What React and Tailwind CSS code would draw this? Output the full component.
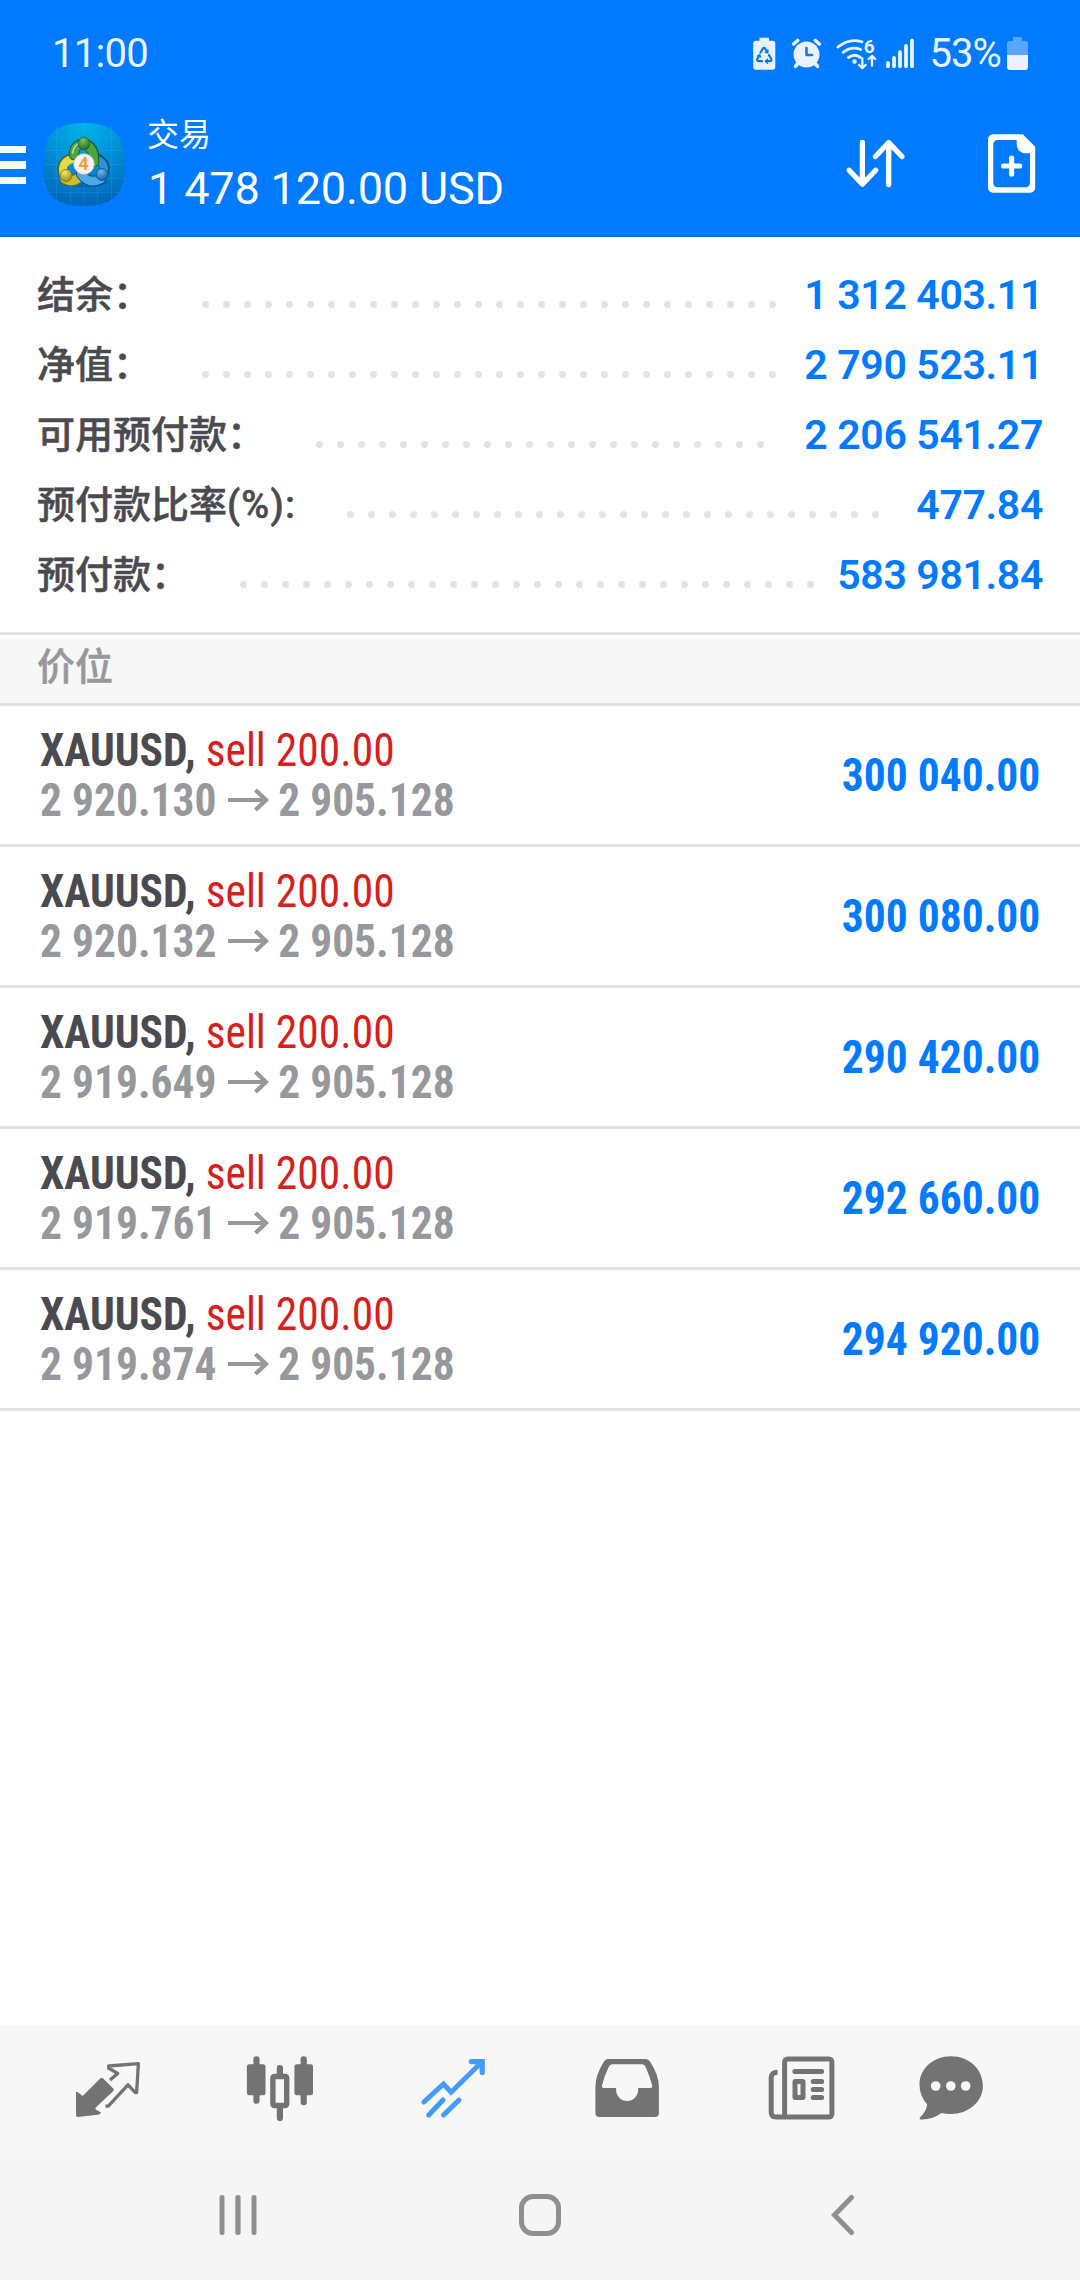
import React, {useState} from "react";

const summary = [
  {label: "结余：", value: "1 312 403.11"},
  {label: "净值：", value: "2 790 523.11"},
  {label: "可用预付款：", value: "2 206 541.27"},
  {label: "预付款比率", unit: "(%):", value: "477.84"},
  {label: "预付款：", value: "583 981.84"},
];

const positions = [
  {symbol: "XAUUSD", side: "sell 200.00", open: "2 920.130", current: "2 905.128", profit: "300 040.00"},
  {symbol: "XAUUSD", side: "sell 200.00", open: "2 920.132", current: "2 905.128", profit: "300 080.00"},
  {symbol: "XAUUSD", side: "sell 200.00", open: "2 919.649", current: "2 905.128", profit: "290 420.00"},
  {symbol: "XAUUSD", side: "sell 200.00", open: "2 919.761", current: "2 905.128", profit: "292 660.00"},
  {symbol: "XAUUSD", side: "sell 200.00", open: "2 919.874", current: "2 905.128", profit: "294 920.00"},
];

// status bar icons
function StatusIcons() {
  return (
    <svg className="w-[164px] h-[36px]" viewBox="752 36 164 36" fill="none" stroke="#e8f3ff" strokeLinecap="round" strokeLinejoin="round">
      {/* battery protection */}
      <path d="M759.5 37.7h9.5v3h3.500a2.800 2.800 0 0 1 2.800 2.800v23.500a2.800 2.800 0 0 1-2.800 2.800h-16.500a2.800 2.800 0 0 1-2.800-2.800v-23.500a2.800 2.800 0 0 1 2.800-2.800h3.500z" fill="#e8f3ff" stroke="none"/>
      <path d="M760.500 52.500l2.300-3.800q1.200-1.700 2.400 0l2 3.300M769 55l2.200 4q.8 2.200-1.600 2.200h-3.300M762 61.200h-3q-2.400-.2-1.600-2.200l2-3.700" stroke="#0f74e8" strokeWidth="2.200"/>
      <path d="M765.300 52.500h2.600v-2.500M767.500 59.200l-2 2l2 2M757.300 56l2.200-1.200l1.100 2.200" stroke="#0f74e8" strokeWidth="1.300"/>
      {/* alarm */}
      <circle cx="806.500" cy="54.500" r="13" fill="#e8f3ff" stroke="none"/>
      <path d="M793.700 44l4-3.500M819.300 44l-4-3.500" strokeWidth="3.600"/>
      <path d="M797.500 64l-2 2.300M815.500 64l2 2.300" strokeWidth="3.600"/>
      <path d="M806.500 48v7h5.500" stroke="#1079f0" strokeWidth="2.600"/>
      {/* wifi 6 */}
      <path d="M838 47q11-9.200 24-5.200M843.200 52.300q8.500-6.500 17.500-2.800M848.500 57.500q6.200-4.400 12 0" strokeWidth="2.900"/>
      <circle cx="854.500" cy="61.500" r="2.200" fill="#e8f3ff" stroke="none"/>
      <path d="M862.300 58.500v9.500M859 65l3.300 3.200l3.300-3.200M872 65.500v-9.500M868.700 59l3.300-3.200l3.300 3.200" strokeWidth="2.400"/>
      <text x="863.700" y="52.500" fontFamily="Roboto, sans-serif" fontSize="19" fontWeight="700" fill="#e8f3ff" stroke="none">6</text>
      {/* signal */}
      <path d="M888 63v3.200M894 58v8.200M900 52v14.200M906 46v20.200M912 40.500v25.700" strokeWidth="3.800"/>
    </svg>
  );
}

function BatteryIcon() {
  return (
    <svg className="w-[21px] h-[34px]" viewBox="0 0 21 34" fill="#e8f3ff">
      <path d="M6 0h9v4h3a3 3 0 0 1 3 3v11H0V7a3 3 0 0 1 3-3h3z" fill="#58a6ff"/>
      <path d="M0 18h21v12a3 3 0 0 1-3 3H3a3 3 0 0 1-3-3z"/>
    </svg>
  );
}

function AppLogo() {
  return (
    <svg className="w-[82px] h-[83px]" viewBox="0 0 82 83">
      <defs>
        <radialGradient id="tile" cx="0.5" cy="0" r="1">
          <stop offset="0" stopColor="#00b5ec"/>
          <stop offset="0.5" stopColor="#0090d8"/>
          <stop offset="1" stopColor="#0065b8"/>
        </radialGradient>
        <radialGradient id="green" cx="0.4" cy="0.25" r="0.8"><stop offset="0" stopColor="#7cc060"/><stop offset="1" stopColor="#176b25"/></radialGradient>
        <radialGradient id="yellow" cx="0.4" cy="0.25" r="0.8"><stop offset="0" stopColor="#f2ea6a"/><stop offset="1" stopColor="#978512"/></radialGradient>
        <radialGradient id="blue" cx="0.4" cy="0.25" r="0.8"><stop offset="0" stopColor="#6cbcf0"/><stop offset="1" stopColor="#0b5aa6"/></radialGradient>
      </defs>
      <path d="M41 0C70 0 82 12 82 41.500S70 83 41 83S0 71 0 41.500S12 0 41 0z" fill="url(#tile)"/>
      <path d="M13.500 3v77M27.500 0v83M41 0v83M54.500 0v83M68.500 3v77M3 14h76M0 27.500h82M0 41.500h82M0 55.500h82M3 69.500h76" stroke="#5cc8f5" strokeOpacity="0.14" strokeWidth="1"/>
      <ellipse cx="41" cy="60" rx="24" ry="4" fill="#003f78" opacity="0.25"/>
      {/* three linked figures around the badge */}
      <g fill="none" strokeLinecap="round">
        <path d="M21 53Q16 39 29 35" stroke="#5b5f1c" strokeWidth="10"/>
        <path d="M22 56Q32 61 39 51" stroke="#6e6a1c" strokeWidth="11"/>
        <path d="M21 53Q17 39 29 36" stroke="#e3dc4a" strokeWidth="8"/>
        <path d="M22 56Q32 61 39 51" stroke="#cdbd30" strokeWidth="9"/>
        <path d="M60 52Q65 41 54 35" stroke="#0e4f86" strokeWidth="9.500"/>
        <path d="M58 56Q46 62 38 51" stroke="#0e4f86" strokeWidth="10.500"/>
        <path d="M60 52Q64 41 54 36" stroke="#2f93d8" strokeWidth="7.500"/>
        <path d="M58 56Q46 62 38 51" stroke="#4aaae8" strokeWidth="8.500"/>
        <path d="M31 32Q31 21 41 21Q52 23 51 39" stroke="#1f5f2c" strokeWidth="10.500"/>
        <path d="M31 32Q31 21 41 21.500Q51 23 51 39" stroke="#4ba543" strokeWidth="8.500"/>
        <path d="M29.500 30Q31 22 37 20" stroke="#b6dfa0" strokeWidth="1.500"/>
      </g>
      <ellipse cx="41" cy="20.500" rx="5.800" ry="6.500" fill="url(#green)" stroke="#1f5f2c" strokeWidth="0.800"/>
      <circle cx="23" cy="52.500" r="6" fill="url(#yellow)" stroke="#7c711c" strokeWidth="0.800"/>
      <circle cx="59" cy="51.500" r="6" fill="url(#blue)" stroke="#0e4f86" strokeWidth="0.800"/>
      <circle cx="41" cy="41" r="10.300" fill="#f6f3ee" stroke="#c9c4b8" strokeWidth="0.800"/>
      <text x="40.500" y="47.200" textAnchor="middle" fontFamily="Roboto, sans-serif" fontSize="17.500" fontWeight="700" fill="#f59a3c">4</text>
    </svg>
  );
}

function SortIcon() {
  return (
    <svg className="w-[60px] h-[60px]" viewBox="846 134 60 60" fill="none" stroke="white" strokeWidth="5.300" strokeLinecap="round" strokeLinejoin="round">
      <path d="M862.400 142.500v41.500M849.200 170.300l13.200 14l13.200-14"/>
      <path d="M888.700 184.500v-41.500M875.500 156.500l13.200-14l13.200 14"/>
    </svg>
  );
}

function NewOrderIcon() {
  return (
    <svg className="w-[48px] h-[60px]" viewBox="988 134 48 60" fill="none">
      <path fillRule="evenodd" fill="white" d="M993 134.300H1022.700L1035.200 146.800V187.700a5 5 0 0 1-5 5H993a5 5 0 0 1-5-5V139.300a5 5 0 0 1 5-5zM997.500 140a4.200 4.200 0 0 0-4.200 4.200V183a4.200 4.200 0 0 0 4.200 4.200H1025.800a4.200 4.200 0 0 0 4.200-4.200V153.300H1025.500a8.800 8.800 0 0 1-8.800-8.800V140z"/>
      <path d="M1011.600 158v16M1003.600 166h16" stroke="white" strokeWidth="5.200" strokeLinecap="round"/>
    </svg>
  );
}

function ArrowRight() {
  return (
    <svg className="w-[45px] h-[24px] shrink-0" viewBox="0 0 42 24" preserveAspectRatio="none" fill="none" stroke="#97989c" strokeWidth="4.200">
      <path d="M0 12h38M27.500 2l10.500 10l-10.500 10"/>
    </svg>
  );
}

// bottom tabs
function QuotesIcon() {
  return (
    <svg className="w-[72px] h-[72px]" viewBox="0 0 72 72" fill="none">
      <path d="M4 38.700L5.500 39L10.700 43L28.300 25.500q1.400-1.400 2.800 0L41.300 35.500q1.200 1.200 0 2.400L23.800 54.500q-1 1.200 0 2L29 59.500L27.500 61.500L6 64q-2 0-2-2z" fill="currentColor"/>
      <path d="M38 27L45.700 20.400L36.800 15.300L36.600 13L66.400 10.700L64.600 39.600L63.400 39.600L56 31.800L36.500 52.800L33.500 53.300" stroke="currentColor" strokeWidth="3.300" strokeLinejoin="round"/>
    </svg>
  );
}

function ChartIcon() {
  return (
    <svg className="w-[72px] h-[72px]" viewBox="0 0 72 72" fill="currentColor">
      <rect x="9.400" y="3.300" width="6.200" height="47.500" rx="3"/>
      <rect x="2.900" y="11.300" width="18.600" height="30.900" rx="2.500"/>
      <rect x="56.600" y="3.300" width="6.200" height="49" rx="3"/>
      <rect x="50.400" y="11.300" width="18.600" height="30.900" rx="2.500"/>
      <path d="M32.800 21v-6a3.100 3.100 0 0 1 6.200 0v6zM32.800 55v10a3.100 3.100 0 0 0 6.200 0V55z"/>
      <rect x="28.900" y="23.500" width="13.800" height="29" rx="1.500" fill="none" stroke="currentColor" strokeWidth="5.400"/>
    </svg>
  );
}

function TradeIcon() {
  return (
    <svg className="w-[72px] h-[72px]" viewBox="0 0 72 72" fill="none" stroke="currentColor" strokeWidth="5" strokeLinecap="round">
      <path d="M6.900 49L26.500 31L34.100 39.200L65 8.700" strokeLinejoin="miter"/>
      <path d="M54.300 8.600H65.200V19.400" strokeWidth="5.200"/>
      <path d="M11.700 62L26 47M26.500 62L42 47"/>
    </svg>
  );
}

function HistoryIcon() {
  return (
    <svg className="w-[72px] h-[72px]" viewBox="0 0 72 72" fill="currentColor">
      <path fillRule="evenodd" d="M16.500 6H55q2.500 0 4 2.500Q67.900 22 67.900 34V60a4 4 0 0 1-4 4H8.400a4 4 0 0 1-4-4V34Q4.400 22 13 8.500Q14.500 6 16.500 6zM21 11.300q-2.200 0-3.200 2.500Q13 24 11 32.500Q10.600 35 13 35H25.100v2a11 11 0 0 0 22 0V35H59.300q2.300 0 1.900-2.500Q59 24 54.500 13.800Q53.500 11.300 51.500 11.300z"/>
    </svg>
  );
}

function NewsIcon() {
  return (
    <svg className="w-[72px] h-[72px]" viewBox="0 0 72 72" fill="none" stroke="currentColor" strokeWidth="5">
      <rect x="18.600" y="5.900" width="47.300" height="58.200" rx="3"/>
      <path d="M11.600 19.300Q5.200 19.300 5.200 24.500V59q0 5.100 5 5.100H20"/>
      <path d="M28.900 18.500H55.600M47.200 28.500h8.400M47.200 36.500h8.400M47.200 44.500h8.400" strokeLinecap="round"/>
      <rect x="29" y="28.500" width="8" height="16" rx="0.500"/>
    </svg>
  );
}

function ChatIcon() {
  return (
    <svg className="w-[72px] h-[72px]" viewBox="0 0 72 72">
      <path d="M36 3.300C54 3.300 67.900 16 67.900 33C67.900 49 53 61 36 61Q31 61 26.500 60Q17 67 5.500 66.500Q3.700 66 5 64.500Q11.500 58 12.200 51.500Q4.500 43 4.500 31.500C4.500 16 18 3.300 36 3.300z" fill="currentColor"/>
      <g fill="#f7f7f7">
        <circle cx="20.700" cy="33" r="4.800"/>
        <circle cx="35.800" cy="33" r="4.800"/>
        <circle cx="50.700" cy="33" r="4.800"/>
      </g>
    </svg>
  );
}

const tabs = [
  {id: "quotes", icon: QuotesIcon, space: ""},
  {id: "chart", icon: ChartIcon, space: "ml-[100px]"},
  {id: "trade", icon: TradeIcon, space: "ml-[101px]"},
  {id: "history", icon: HistoryIcon, space: "ml-[102px]"},
  {id: "news", icon: NewsIcon, space: "ml-[103px]"},
  {id: "chat", icon: ChatIcon, space: "ml-[77px]"},
];

function SummaryRow({label, unit, value}) {
  return (
    <div className="flex h-[70px] items-center">
      <div className="pt-[2px] text-[38px] font-medium text-[#4b4a50] whitespace-nowrap [-webkit-text-stroke:0.5px_#4b4a50]">
        {label}
        {unit && <span className="tracking-[1.2px]">{unit}</span>}
      </div>
      {/* leader dots, the ones that don't fit wrap out of sight */}
      <div className="ml-[51px] mr-[21.5px] mt-[20px] flex h-[7px] flex-1 flex-wrap gap-x-[14px] overflow-hidden">
        {Array.from({length: 32}).map((_, i) => (
          <span key={i} className="size-[7px] rounded-full bg-[#e3e3e3]"/>
        ))}
      </div>
      <div className="pt-[4px] text-[41px] font-semibold tracking-[-0.35px] text-[#007aff] whitespace-nowrap">{value}</div>
    </div>
  );
}

function PositionRow({item}) {
  return (
    <div className="flex h-[141px] items-center justify-between border-b-[3px] border-[#e3e3e3] pl-[40px] pr-[40px] font-['Roboto_Condensed',Roboto,sans-serif] text-[46.5px] leading-[50px] [font-stretch:75%]">
      <div className="origin-left scale-x-[0.935]">
        <div className="whitespace-nowrap">
          <span className="font-bold text-[#4b4a50]">{item.symbol}, </span>
          <span className="text-[#d62020]">{item.side}</span>
        </div>
        <div className="flex items-center whitespace-nowrap font-bold text-[#97989c]">
          <span>{item.open}</span>
          <span className="ml-[12px] mr-[9px] flex"><ArrowRight/></span>
          <span>{item.current}</span>
        </div>
      </div>
      <div className="origin-right scale-x-[0.935] font-bold text-[#007aff]">{item.profit}</div>
    </div>
  );
}

export default function App() {
  const [tab, setTab] = useState("trade");

  return (
    <div className="flex h-[2280px] w-[1080px] flex-col overflow-hidden bg-white font-[Roboto,'Noto_Sans_CJK_SC',sans-serif]">
      <header className="h-[237px] border-b-2 border-[#0b6cd0] bg-[#007aff] text-white">
        <div className="flex h-[107px] items-center pl-[52px] pr-[52px] text-[40px] text-[#e8f3ff]">
          <span className="flex-1 pt-px tracking-[-0.7px]">11:00</span>
          <StatusIcons/>
          <span className="ml-[13px] mr-[6px] pt-px tracking-[-0.9px]">53%</span>
          <BatteryIcon/>
        </div>
        <div className="flex h-[114px] items-center">
          <div className="flex w-[26px] flex-col gap-[8px] pt-[2px]">
            <span className="h-[7px] bg-white"/>
            <span className="h-[8px] bg-white"/>
            <span className="h-[7px] bg-white"/>
          </div>
          <div className="ml-[17px]"><AppLogo/></div>
          <div className="ml-[22px] flex-1 pt-px">
            <div className="text-[32px] leading-[48px]">交易</div>
            <div className="pl-px text-[45px] leading-[60px] tracking-[-0.15px]">1 478 120.00 USD</div>
          </div>
          <SortIcon/>
          <div className="ml-[82px] mr-[44px]"><NewOrderIcon/></div>
        </div>
      </header>

      <section className="h-[398px] border-b-[3px] border-[#e3e3e3] pl-[37px] pr-[37px] pt-[22px]">
        {summary.map((row) => <SummaryRow key={row.label} label={row.label} unit={row.unit} value={row.value}/>)}
      </section>

      <div className="mt-[3px] flex h-[68px] items-center border-b-[3px] border-[#e3e3e3] bg-[#f7f7f7] pb-[7px] pl-[37px] text-[38px] font-medium text-[#97989c] [-webkit-text-stroke:0.5px_#97989c]">价位</div>

      <main className="flex-1">
        {positions.map((item) => <PositionRow key={item.open} item={item}/>)}
      </main>

      <nav className="flex h-[129px] items-center bg-[#f7f7f7] pb-[2px] pl-[72px]">
        {tabs.map(({id, icon: Icon, space}) => (
          <button key={id} aria-label={id} onClick={() => setTab(id)} className={`${space} ${tab === id ? "text-[#449bfc]" : "text-[#737373]"}`}>
            <Icon/>
          </button>
        ))}
      </nav>

      <div className="flex h-[126px] items-center bg-[#f5f5f5] pb-[4px] pl-[219px]">
        <svg className="h-[40px] w-[38px]" viewBox="0 0 38 40" fill="#8f8f8f">
          <rect x="0.500" width="5" height="40" rx="2.500"/>
          <rect x="16.300" width="5.300" height="40" rx="2.500"/>
          <rect x="32.500" width="5" height="40" rx="2.500"/>
        </svg>
        <div className="ml-[262px] h-[42px] w-[42px] rounded-[14px] border-[5px] border-[#8f8f8f]"/>
        <svg className="ml-[269px] h-[42px] w-[26px]" viewBox="0 0 26 42" fill="none" stroke="#8f8f8f" strokeWidth="5" strokeLinecap="round">
          <path d="M21.500 3.500L4.500 21L21.500 38.500"/>
        </svg>
      </div>
    </div>
  );
}
